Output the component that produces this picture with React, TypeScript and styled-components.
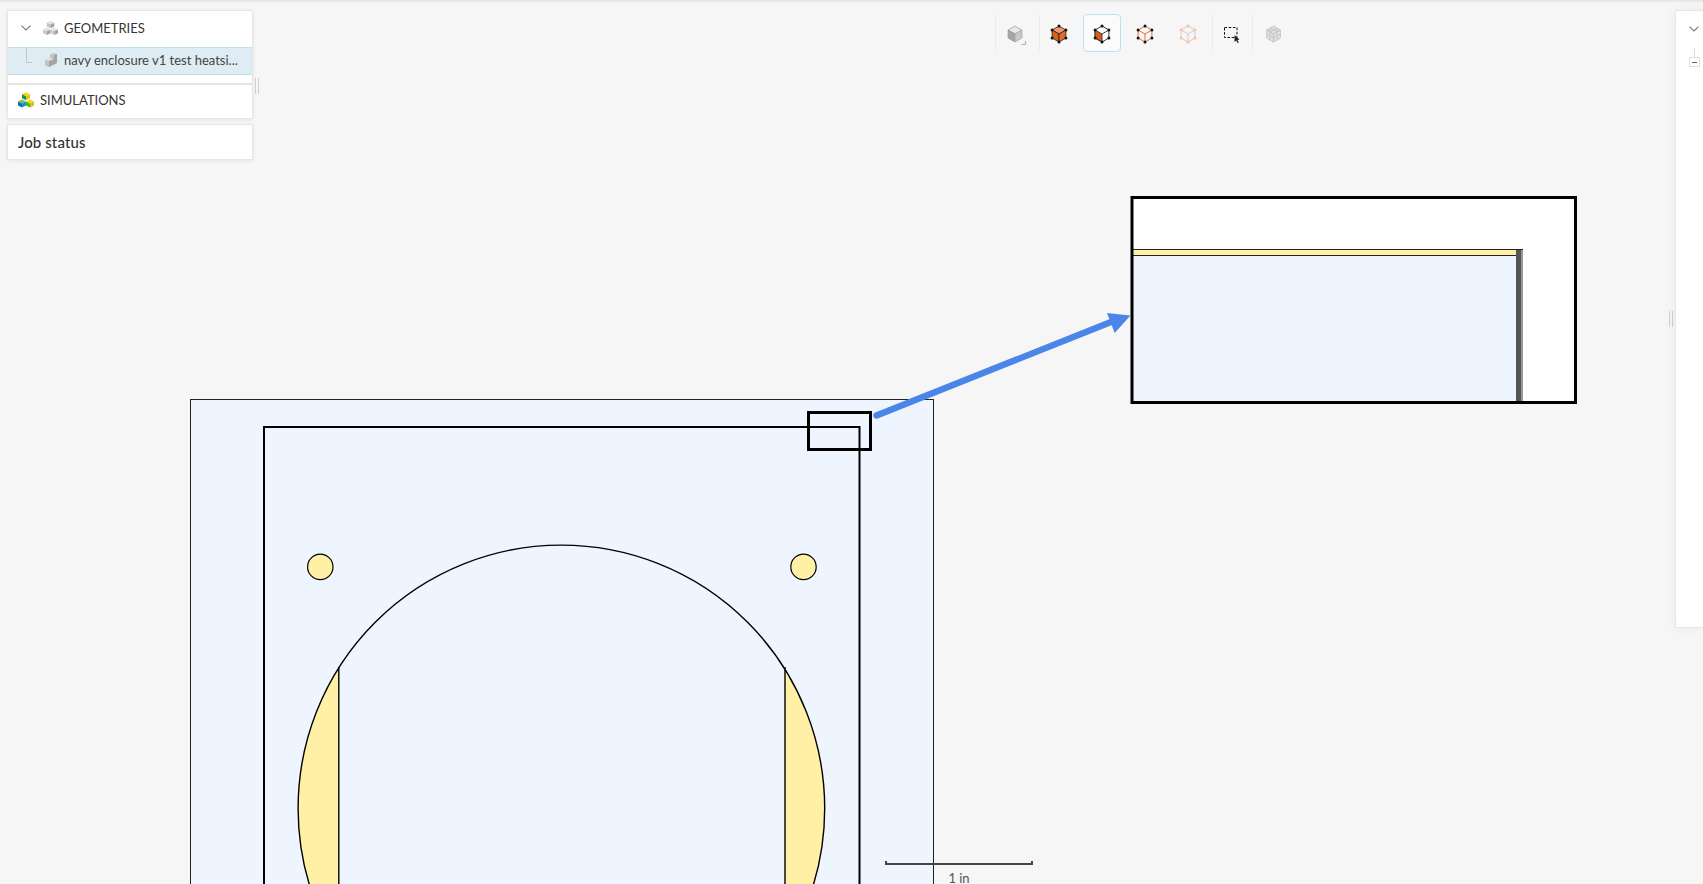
import React from "react";
import styled, { createGlobalStyle } from "styled-components";

const Global = createGlobalStyle`
  html, body { margin: 0; padding: 0; height: 100%; overflow: hidden; }
  body { background: #f6f6f6; font-family: Lato, "Open Sans", "Liberation Sans", sans-serif; color: #333; }
`;

const Page = styled.div`
  position: relative;
  width: 1703px;
  height: 884px;
  overflow: hidden;
  background: #f6f6f6;
  border-top: 2px solid #e8e8e8;
  box-sizing: border-box;
`;

const Canvas = styled.svg`
  position: absolute;
  left: 0;
  top: -2px;
  display: block;
`;

const LeftDock = styled.div`
  position: absolute;
  left: 7px;
  top: 8px;
  width: 246px;
  display: flex;
  flex-direction: column;
`;

const Panel = styled.section<{ $gap?: number }>`
  background: #fff;
  border: 1px solid #e6e6e6;
  box-sizing: border-box;
  margin-top: ${(p) => p.$gap ?? 0}px;
  box-shadow: 0 1px 4px rgba(0, 0, 0, 0.07);
`;

const HeadRow = styled.div<{ $h: number; $pad: number; $lift: number }>`
  display: flex;
  align-items: center;
  box-sizing: border-box;
  height: ${(p) => p.$h}px;
  padding-left: ${(p) => p.$pad}px;
  padding-bottom: ${(p) => p.$lift}px;
  gap: 6px;
  font-size: 13px;
  color: #333;
  white-space: nowrap;
`;

const ChevronSlot = styled.span`
  display: flex;
  margin-right: 6px;
`;

const JobTitle = styled.div`
  height: 34px;
  display: flex;
  align-items: center;
  padding-left: 10px;
  font-size: 15px;
  font-weight: 500;
  color: #333;
  letter-spacing: 0.1px;
`;

const ChildRow = styled.div`
  position: relative;
  display: flex;
  align-items: center;
  height: 28px;
  padding-left: 37px;
  padding-bottom: 2px;
  gap: 7px;
  margin-bottom: 8px;
  background: #deedf4;
  border-top: 1px solid #c3dfe9;
  border-bottom: 1px solid #c3dfe9;
  box-sizing: border-box;
  font-size: 13px;
  color: #444;
  white-space: nowrap;
`;

const TreeElbow = styled.span`
  position: absolute;
  left: 18px;
  top: 0;
  width: 5px;
  height: 14px;
  border-left: 1px solid #c6c6c6;
  border-bottom: 1px solid #c6c6c6;
`;

const Grip = styled.div<{ $left: number; $top: number }>`
  position: absolute;
  left: ${(p) => p.$left}px;
  top: ${(p) => p.$top}px;
  width: 2px;
  height: 16px;
  border-left: 1px solid #cfcfcf;
  border-right: 1px solid #cfcfcf;
`;

const Toolbar = styled.div`
  position: absolute;
  left: 995px;
  top: 12px;
  display: flex;
  align-items: center;
`;

const Sep = styled.span`
  width: 1px;
  height: 38px;
  background: #ececec;
`;

const ToolBtn = styled.div<{ $active?: boolean; $tight?: boolean }>`
  width: 38px;
  height: 38px;
  margin-right: ${(p) => (p.$tight ? 1 : 5)}px;
  padding-top: 2px;
  box-sizing: border-box;
  display: flex;
  align-items: center;
  justify-content: center;
  border-radius: 4px;
  border: 1px solid ${(p) => (p.$active ? "#bfe0f0" : "transparent")};
  background: ${(p) => (p.$active ? "#fbfbfb" : "transparent")};
`;

const RightDock = styled.aside`
  position: absolute;
  left: 1675px;
  top: 8px;
  width: 28px;
  height: 618px;
  background: #fff;
  border-left: 1px solid #e6e6e6;
  border-top: 1px solid #e6e6e6;
  border-bottom: 1px solid #e6e6e6;
  box-sizing: border-box;
  box-shadow: 0 0 14px rgba(0, 0, 0, 0.05);
  display: flex;
  flex-direction: column;
  align-items: flex-start;
  padding: 15px 0 0 13px;
`;

const TreeStem = styled.span`
  width: 1px;
  height: 9px;
  margin: 16px 0 0 5px;
  background: #dcdcdc;
`;

const Collapse = styled.span`
  width: 11px;
  height: 10px;
  box-sizing: border-box;
  border: 1px solid #dedede;
  display: flex;
  align-items: center;
  justify-content: center;
  &::before {
    content: "";
    width: 5px;
    height: 1px;
    background: #666;
  }
`;

const Scale = styled.div`
  position: absolute;
  left: 885px;
  top: 859px;
  width: 148px;
  height: 4px;
  box-sizing: border-box;
  border-bottom: 2px solid #444;
  border-left: 2px solid #444;
  border-right: 2px solid #444;
`;

const ScaleLabel = styled.span`
  position: absolute;
  left: 0;
  right: 0;
  top: 11px;
  text-align: center;
  font-size: 13px;
  line-height: 12px;
  color: #555;
`;

const Chevron = () => (
  <svg width="10" height="6" viewBox="0 0 10 6" fill="none">
    <path d="M0.5 0.7 L5 5 L9.5 0.7" stroke="#777" strokeWidth="1.1" />
  </svg>
);

const Cube = ({ x, y, s, top, left, right }: { x: number; y: number; s: number; top: string; left: string; right: string }) => (
  <g>
    <path d={`M${x} ${y - s} L${x + s} ${y - s / 2} L${x} ${y} L${x - s} ${y - s / 2} Z`} fill={top} />
    <path d={`M${x - s} ${y - s / 2} L${x} ${y} L${x} ${y + s} L${x - s} ${y + s / 2} Z`} fill={left} />
    <path d={`M${x + s} ${y - s / 2} L${x} ${y} L${x} ${y + s} L${x + s} ${y + s / 2} Z`} fill={right} />
  </g>
);

const GeometriesIcon = () => (
  <svg width="15" height="16" viewBox="0 0 16 16">
    <Cube x={8} y={4.3} s={4} top="#e2e2e2" left="#c2c2c2" right="#a2a2a2" />
    <Cube x={4} y={11.5} s={4} top="#e2e2e2" left="#cbcbcb" right="#a2a2a2" />
    <Cube x={12} y={11.5} s={4} top="#e2e2e2" left="#cbcbcb" right="#a2a2a2" />
  </svg>
);

const SimulationsIcon = () => (
  <svg width="16" height="16" viewBox="0 0 16 16">
    <Cube x={8} y={4.3} s={4} top="#f5d90a" left="#1c8f63" right="#e2c80f" />
    <Cube x={4} y={11.5} s={4} top="#7cc12f" left="#0a6fc2" right="#1f8ccf" />
    <Cube x={12} y={11.5} s={4} top="#f5d90a" left="#59ad2e" right="#d3c21d" />
  </svg>
);

const PartIcon = () => (
  <svg width="12" height="14" viewBox="0 0 12 14">
    <path d="M0 7 L5 5 L5 1.5 L9 0 L12 1 L12 10 L4 14 L0 12.5 Z" fill="#c4c4c4" />
    <path d="M4 8 L4 14 L12 10 L12 1 L9 2.2 L9 6 Z" fill="#a4a4a4" />
    <path d="M0 7 L5 5 L8 6.3 L4 8 Z" fill="#e2e2e2" />
  </svg>
);

const V = { t: [10, 2], ur: [16.9, 6], lr: [16.9, 14], b: [10, 18], ll: [3.1, 14], ul: [3.1, 6], c: [10, 10] };
const pts = (...k: (keyof typeof V)[]) => k.map((n) => V[n].join(",")).join(" ");
const corners = [V.t, V.ur, V.lr, V.b, V.ll, V.ul];

const Dots = ({ color, r = 1.5 }: { color: string; r?: number }) => (
  <>
    {corners.map(([x, y], i) => (
      <circle key={i} cx={x} cy={y} r={r} fill={color} />
    ))}
  </>
);

const CubeIcon = ({ children }: { children: React.ReactNode }) => (
  <svg width="20" height="20" viewBox="0 0 20 20">
    {children}
  </svg>
);

const ShadedCube = () => (
  <CubeIcon>
    <polygon points={pts("t", "ur", "c", "ul")} fill="#f1956b" stroke="#222" strokeWidth="0.8" />
    <polygon points={pts("ul", "c", "b", "ll")} fill="#dd5f1f" stroke="#222" strokeWidth="0.8" />
    <polygon points={pts("ur", "c", "b", "lr")} fill="#e26a2a" stroke="#222" strokeWidth="0.8" />
    <Dots color="#111" />
  </CubeIcon>
);

const HalfCube = () => (
  <CubeIcon>
    <polygon points={pts("t", "ur", "lr", "b", "ll", "ul")} fill="#fff" stroke="#222" strokeWidth="0.9" />
    <polygon points={pts("ul", "c", "b", "ll")} fill="#dd5a1c" stroke="#222" strokeWidth="0.8" />
    <polyline points={pts("ur", "c")} stroke="#222" strokeWidth="0.9" fill="none" />
    <Dots color="#111" />
  </CubeIcon>
);

const WireCube = ({ edge, dot, spoke }: { edge: string; dot: string; spoke: string }) => (
  <CubeIcon>
    <polygon points={pts("t", "ur", "lr", "b", "ll", "ul")} fill="none" stroke={edge} strokeWidth="1" />
    <polyline points={pts("ul", "c", "ur")} fill="none" stroke={spoke} strokeWidth="1" />
    <line x1="10" y1="10" x2="10" y2="18" stroke={spoke} strokeWidth="1" />
    <Dots color={dot} />
  </CubeIcon>
);

const DisplayModeIcon = () => (
  <svg width="30" height="26" viewBox="0 0 30 26">
    <g transform="translate(5 3)">
      <polygon points={pts("t", "ur", "c", "ul")} fill="#e8e8e8" stroke="#a8a8a8" strokeWidth="0.8" />
      <polygon points={pts("ul", "c", "b", "ll")} fill="#a6a6a6" stroke="#999" strokeWidth="0.8" />
      <polygon points={pts("ur", "c", "b", "lr")} fill="#c9c9c9" stroke="#a8a8a8" strokeWidth="0.8" />
    </g>
    <path d="M25.5 20 V23.5 H21.5" fill="none" stroke="#b0b0b0" strokeWidth="1" />
  </svg>
);

const BoxSelect = () => (
  <svg width="20" height="20" viewBox="0 0 20 20">
    <rect x="2.5" y="3.5" width="12.5" height="10" fill="none" stroke="#111" strokeWidth="1" strokeDasharray="2.6 1.6" />
    <path d="M12.5 11 L12.5 18 L14.2 16.4 L15.6 19 L16.8 18.4 L15.5 15.9 L17.5 15.6 Z" fill="#222" />
  </svg>
);

const MeshCube = () => (
  <svg width="20" height="20" viewBox="0 0 20 20">
    <g transform="translate(1.5 0)" opacity="0.6">
      <polygon points={pts("t", "ur", "lr", "b", "ll", "ul")} fill="#d4d4d4" stroke="#aaa" strokeWidth="1" />
      <path d="M3.1 6 L10 10 L16.9 6 M10 10 V18" fill="none" stroke="#8f8f8f" strokeWidth="0.8" />
      <path d="M6.5 4 V16 M13.5 4 V16 M3.1 10 L10 14 L16.9 10 M6.5 8 L13.5 4 M6.5 4 L13.5 8" fill="none" stroke="#9c9c9c" strokeWidth="0.7" />
    </g>
  </svg>
);

const BLUE = "#eef5fe";
const YELLOW = "#fff0a5";

const Drawing = () => (
  <Canvas width="1703" height="884" viewBox="0 0 1703 884">
    <rect x="190.5" y="399.5" width="743" height="600" fill={BLUE} stroke="#222" strokeWidth="1" />
    <rect x="264" y="427" width="595.5" height="600" fill="none" stroke="#000" strokeWidth="2" />
    <circle cx="320.3" cy="566.9" r="12.7" fill={YELLOW} stroke="#000" strokeWidth="1.2" />
    <circle cx="803.5" cy="566.9" r="12.7" fill={YELLOW} stroke="#000" strokeWidth="1.2" />
    <circle cx="561.4" cy="808.4" r="263.3" fill={YELLOW} />
    <path d="M338.8 667 A263.3 263.3 0 0 1 785 667 L785 900 L338.8 900 Z" fill={BLUE} />
    <circle cx="561.4" cy="808.4" r="263.3" fill="none" stroke="#000" strokeWidth="1.4" />
    <path d="M338.8 667 V900 M785 667 V900" stroke="#000" strokeWidth="1.4" fill="none" />
    <rect x="808.5" y="412.5" width="62" height="37" fill="none" stroke="#000" strokeWidth="3" />

    <line x1="876.5" y1="415.5" x2="1116" y2="320" stroke="#4a86e8" strokeWidth="6.5" strokeLinecap="round" />
    <polygon points="1107,313 1130.5,315.5 1114.7,333" fill="#4a86e8" />

    <rect x="1132" y="197.5" width="443.5" height="205" fill="#fff" />
    <rect x="1133" y="255.5" width="383" height="146" fill={BLUE} />
    <rect x="1133" y="249.5" width="383" height="6" fill={YELLOW} />
    <path d="M1133 249.5 H1523 M1133 255.5 H1516" stroke="#222" strokeWidth="1" fill="none" />
    <rect x="1516" y="250" width="5" height="151" fill="#555" />
    <rect x="1521" y="250" width="2" height="151" fill="#999" />
    <rect x="1132" y="197.5" width="443.5" height="205" fill="none" stroke="#000" strokeWidth="3" />
  </Canvas>
);

export default function App() {
  return (
    <Page>
      <Global />
      <Drawing />

      <LeftDock>
        <Panel>
          <HeadRow $h={36} $pad={13} $lift={2}>
            <ChevronSlot>
              <Chevron />
            </ChevronSlot>
            <GeometriesIcon />
            <span>GEOMETRIES</span>
          </HeadRow>
          <ChildRow>
            <TreeElbow />
            <PartIcon />
            <span>navy enclosure v1 test heatsi...</span>
          </ChildRow>
        </Panel>
        <Panel>
          <HeadRow $h={33} $pad={10} $lift={3}>
            <SimulationsIcon />
            <span>SIMULATIONS</span>
          </HeadRow>
        </Panel>
        <Panel $gap={5}>
          <JobTitle>Job status</JobTitle>
        </Panel>
      </LeftDock>
      <Grip $left={255} $top={76} />

      <Toolbar>
        <Sep />
        <ToolBtn><DisplayModeIcon /></ToolBtn>
        <Sep />
        <ToolBtn><ShadedCube /></ToolBtn>
        <ToolBtn $active><HalfCube /></ToolBtn>
        <ToolBtn><WireCube edge="#e2703a" dot="#111" spoke="#e2703a" /></ToolBtn>
        <ToolBtn><WireCube edge="#efc3ab" dot="#f2c4ae" spoke="#d8cdc6" /></ToolBtn>
        <Sep />
        <ToolBtn $tight><BoxSelect /></ToolBtn>
        <Sep />
        <ToolBtn><MeshCube /></ToolBtn>
      </Toolbar>

      <Grip $left={1669} $top={309} />
      <RightDock>
        <Chevron />
        <TreeStem />
        <Collapse />
      </RightDock>

      <Scale>
        <ScaleLabel>1 in</ScaleLabel>
      </Scale>
    </Page>
  );
}
